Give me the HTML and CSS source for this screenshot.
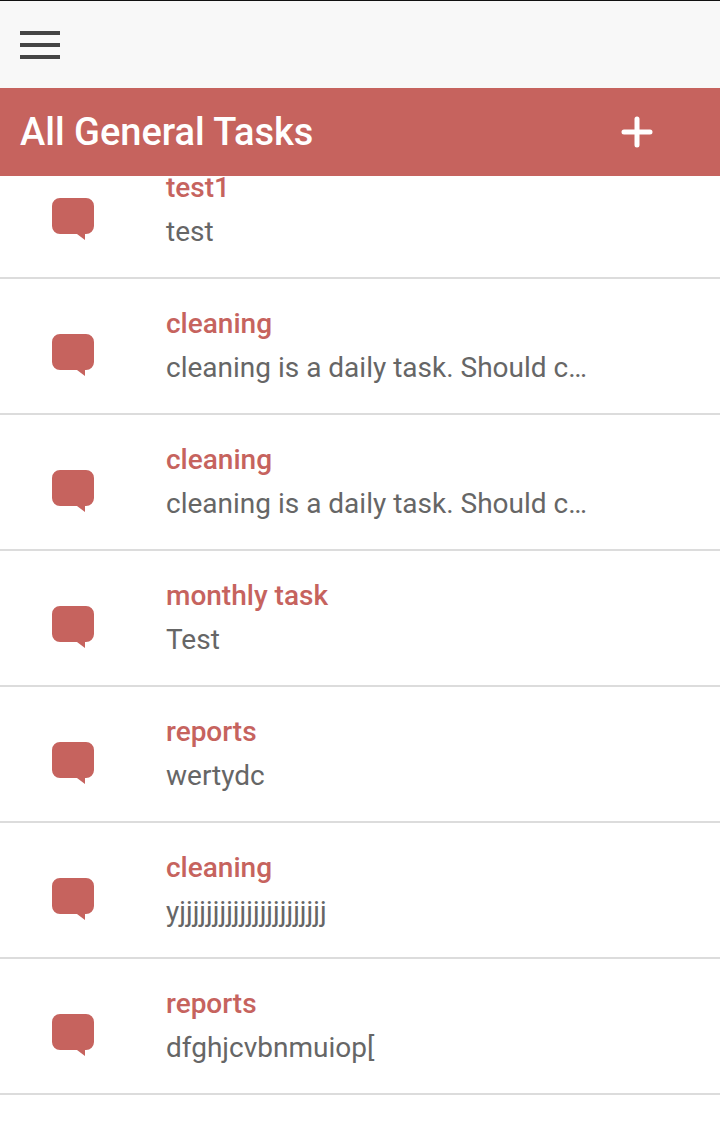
FILE: index.html
```html
<!doctype html>
<html lang="en">
<head>
	<meta charset="utf-8">
	<meta name="viewport" content="width=device-width, initial-scale=1">
	<title>All General Tasks</title>
	<link rel="stylesheet" href="styles.css">
</head>
<body>

	<nav class="topbar">
		<button class="menu-button" aria-label="Menu">
			<span></span>
			<span></span>
			<span></span>
		</button>
	</nav>

	<header class="titlebar">
		<h1>All General Tasks</h1>
		<button class="add-button" aria-label="Add task">
			<svg width="32" height="32" viewBox="0 0 32 32"><path d="M16 3v26M3 16h26" /></svg>
		</button>
	</header>

	<main class="tasks">
		<ul class="task-list">
			<li class="task">
				<svg class="task-icon" viewBox="0 0 42 42"><path d="M8 0h26a8 8 0 0 1 8 8v20a8 8 0 0 1-8 8h-1v6l-8-6H8a8 8 0 0 1-8-8V8a8 8 0 0 1 8-8z" /></svg>
				<div class="task-text">
					<h2>test1</h2>
					<p>test</p>
				</div>
			</li>
			<li class="task">
				<svg class="task-icon" viewBox="0 0 42 42"><path d="M8 0h26a8 8 0 0 1 8 8v20a8 8 0 0 1-8 8h-1v6l-8-6H8a8 8 0 0 1-8-8V8a8 8 0 0 1 8-8z" /></svg>
				<div class="task-text">
					<h2>cleaning</h2>
					<p>cleaning is a daily task. Should c…</p>
				</div>
			</li>
			<li class="task">
				<svg class="task-icon" viewBox="0 0 42 42"><path d="M8 0h26a8 8 0 0 1 8 8v20a8 8 0 0 1-8 8h-1v6l-8-6H8a8 8 0 0 1-8-8V8a8 8 0 0 1 8-8z" /></svg>
				<div class="task-text">
					<h2>cleaning</h2>
					<p>cleaning is a daily task. Should c…</p>
				</div>
			</li>
			<li class="task">
				<svg class="task-icon" viewBox="0 0 42 42"><path d="M8 0h26a8 8 0 0 1 8 8v20a8 8 0 0 1-8 8h-1v6l-8-6H8a8 8 0 0 1-8-8V8a8 8 0 0 1 8-8z" /></svg>
				<div class="task-text">
					<h2>monthly task</h2>
					<p>Test</p>
				</div>
			</li>
			<li class="task">
				<svg class="task-icon" viewBox="0 0 42 42"><path d="M8 0h26a8 8 0 0 1 8 8v20a8 8 0 0 1-8 8h-1v6l-8-6H8a8 8 0 0 1-8-8V8a8 8 0 0 1 8-8z" /></svg>
				<div class="task-text">
					<h2>reports</h2>
					<p>wertydc</p>
				</div>
			</li>
			<li class="task">
				<svg class="task-icon" viewBox="0 0 42 42"><path d="M8 0h26a8 8 0 0 1 8 8v20a8 8 0 0 1-8 8h-1v6l-8-6H8a8 8 0 0 1-8-8V8a8 8 0 0 1 8-8z" /></svg>
				<div class="task-text">
					<h2>cleaning</h2>
					<p>yjjjjjjjjjjjjjjjjjjjjjj</p>
				</div>
			</li>
			<li class="task">
				<svg class="task-icon" viewBox="0 0 42 42"><path d="M8 0h26a8 8 0 0 1 8 8v20a8 8 0 0 1-8 8h-1v6l-8-6H8a8 8 0 0 1-8-8V8a8 8 0 0 1 8-8z" /></svg>
				<div class="task-text">
					<h2>reports</h2>
					<p>dfghjcvbnmuiop[</p>
				</div>
			</li>
		</ul>
	</main>

</body>
</html>
```

FILE: styles.css
```css
:root {
	--main-color: #c6635e;
	--text-color: #666;
	--line-color: #dcdcdc;
}

html {
	height: 100%;
}
body {
	height: 100%;
	margin: 0;
	display: flex;
	flex-direction: column;
	overflow: hidden;
	background-color: #fff;
	font-family: Roboto, "Liberation Sans", sans-serif;
}

.topbar {
	flex: none;
	box-sizing: border-box;
	height: 88px;
	padding: 1px 0 0 20px;
	display: flex;
	align-items: center;
	background-color: #f8f8f8;
	border-top: 1px solid #111;
}
.menu-button {
	display: flex;
	flex-direction: column;
	gap: 8px;
	padding: 0;
	border: 0;
	background: none;
}
.menu-button span {
	display: block;
	width: 40px;
	height: 4px;
	background-color: #444;
}

.titlebar {
	flex: none;
	height: 88px;
	padding: 0 67px 0 20px;
	display: flex;
	align-items: center;
	justify-content: space-between;
	background-color: var(--main-color);
	color: #fff;
}
.titlebar h1 {
	margin: 0;
	font-size: 38px;
	font-weight: 500;
}
.add-button {
	display: flex;
	padding: 0;
	border: 0;
	background: none;
}
.add-button path {
	fill: none;
	stroke: #fff;
	stroke-width: 5;
	stroke-linecap: round;
}

.tasks {
	flex: 1;
	overflow: hidden;
}
.task-list {
	list-style: none;
	margin: -33px 0 0;
	padding: 0;
}
.task {
	box-sizing: border-box;
	height: 136px;
	padding-left: 52px;
	display: flex;
	gap: 72px;
	border-bottom: 2px solid var(--line-color);
}
.task-icon {
	flex: none;
	width: 42px;
	height: 42px;
	margin-top: 55px;
	fill: var(--main-color);
}
.task-text {
	padding-top: 29px;
}
.task-text h2 {
	margin: 0;
	font-size: 28px;
	line-height: 32px;
	font-weight: 500;
	color: var(--main-color);
}
.task-text p {
	margin: 12px 0 0;
	font-size: 28px;
	line-height: 32px;
	color: var(--text-color);
}
```
